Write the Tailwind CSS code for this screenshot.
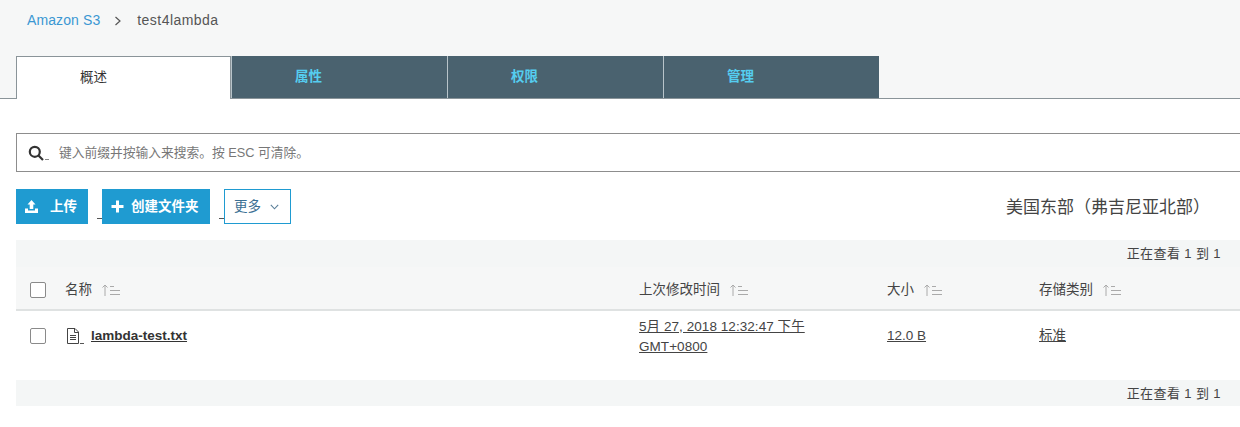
<!DOCTYPE html>
<html lang="zh-CN">
<head>
  <meta charset="UTF-8" />
  <title>test4lambda - S3</title>
  <script src="https://cdn.jsdelivr.net/npm/@tailwindcss/browser@4"></script>
</head>
<body class="bg-white h-[427px] overflow-hidden font-['Liberation_Sans','Noto_Sans_CJK_SC',sans-serif] text-[13.5px] text-[#444]">
  <!-- breadcrumb + tabs -->
  <header class="h-[99px] bg-[#f6f7f7] border-b border-[#8a9499]">
    <nav class="h-[56px] pl-[27px] pb-[15px] flex items-center text-[14px]">
      <a class="text-[#3b97d3] tracking-[0.1px]">Amazon S3</a>
      <svg class="w-[8px] h-[10px] ml-[14px] mr-[15px]" viewBox="0 0 8 10" fill="none" stroke="#555" stroke-width="1.2"><path d="M1.5 1l4.5 4-4.5 4"/></svg>
      <span class="text-[#555] tracking-[0.45px]">test4lambda</span>
    </nav>
    <div class="flex pl-[16px] h-[43px]">
      <div class="w-[215px] h-[43px] bg-white border border-b-0 border-[#8a9499] flex items-center pl-[63px] text-[#333]">概述</div>
      <div class="w-[216px] h-[42px] bg-[#4a626f] border-l border-[#b8c4ca] flex items-center pl-[63px] font-bold text-[#55cdf0]">属性</div>
      <div class="w-[216px] h-[42px] bg-[#4a626f] border-l border-[#b8c4ca] flex items-center pl-[63px] font-bold text-[#55cdf0]">权限</div>
      <div class="w-[216px] h-[42px] bg-[#4a626f] border-l border-[#b8c4ca] flex items-center pl-[63px] font-bold text-[#55cdf0]">管理</div>
    </div>
  </header>

  <main class="pl-[16px] pt-[34px]">
    <!-- search -->
    <div class="h-[39px] border border-r-0 border-[#8d8d8d] flex items-center pl-[11px] text-[#777]">
      <svg class="w-[16px] h-[16px] mt-[1px]" viewBox="0 0 16 16" fill="none" stroke="#333" stroke-width="2.2"><circle cx="6.8" cy="6.8" r="5"/><path d="M10.5 10.5l4.5 4.5"/></svg>
      <span class="w-[4px] h-px bg-[#888] mt-[14px] ml-[1px]"></span>
      <span class="ml-[10px] mt-[1px] text-[12.75px]">键入前缀并按输入来搜索。按 ESC 可清除。</span>
    </div>

    <!-- actions -->
    <div class="flex items-center mt-[17px] h-[35px] pr-[30px]">
      <button class="w-[72px] h-[35px] bg-[#1f9bd1] text-white font-bold flex items-center pl-[8px]">
        <svg class="w-[15px] h-[15px]" viewBox="0 0 15 15" fill="white"><path d="M7.5 1L11.5 5.5H9.3V10H5.700V5.500H3.500Z"/><path d="M1 9.500H4V11.500H11V9.500H14V14H1Z"/></svg>
        <span class="ml-[11px] mt-[2px]">上传</span>
      </button>
      <span class="w-[5px] h-px ml-[9px] bg-[#555] mt-[24px]"></span>
      <button class="w-[108px] h-[35px] bg-[#1f9bd1] text-white font-bold flex items-center pl-[9px]">
        <svg class="w-[13px] h-[13px]" viewBox="0 0 13 13" fill="white"><path d="M5 0.500H8V5H12.500V8H8V12.500H5V8H0.500V5H5Z"/></svg>
        <span class="ml-[7px] mt-[2px]">创建文件夹</span>
      </button>
      <span class="w-[5px] h-px ml-[9px] bg-[#555] mt-[24px]"></span>
      <button class="w-[67px] h-[35px] border border-[#1f9bd1] text-[#3a6f93] flex items-center pl-[9px]">
        <span class="mt-[2px]">更多</span>
        <svg class="w-[9px] h-[6px] ml-[9px] mt-[1px]" viewBox="0 0 9 6" fill="none" stroke="#5a7f99" stroke-width="1.100"><path d="M0.800 0.800L4.500 4.800L8.200 0.800"/></svg>
      </button>
      <span class="ml-auto mt-[2px] text-[17px] text-[#444]">美国东部（弗吉尼亚北部）</span>
    </div>

    <!-- table -->
    <div class="mt-[16px]">
      <div class="h-[27px] pt-[1px] bg-[#f4f6f6] flex items-center justify-end pr-[19px] text-[13px] text-[#444] tracking-[0.4px]">正在查看 1 到 1</div>
      <div class="h-[44px] pt-[3px] bg-[#f6f7f7] border-b-2 border-[#dfe2e2] grid grid-cols-[623px_248px_152px_1fr] items-center">
        <div class="flex items-center">
          <span class="w-[16px] h-[16px] ml-[14px] border border-[#8a8a8a] rounded-[2px] bg-white"></span>
          <span class="ml-[19px] mt-[2px]">名称</span>
          <svg class="w-[20px] h-[12px] ml-[9px]" viewBox="0 0 20 12" fill="none" stroke="#aaa"><path d="M4 12V1M1.500 3.500L4 1L6.500 3.500M9 2.500H13M9 6.500H19M9 10.500H19"/></svg>
        </div>
        <div class="flex items-center"><span class="mt-[2px]">上次修改时间</span><svg class="w-[20px] h-[12px] ml-[9px]" viewBox="0 0 20 12" fill="none" stroke="#aaa"><path d="M4 12V1M1.500 3.500L4 1L6.500 3.500M9 2.500H13M9 6.500H19M9 10.500H19"/></svg></div>
        <div class="flex items-center"><span class="mt-[2px]">大小</span><svg class="w-[20px] h-[12px] ml-[9px]" viewBox="0 0 20 12" fill="none" stroke="#aaa"><path d="M4 12V1M1.500 3.500L4 1L6.500 3.500M9 2.500H13M9 6.500H19M9 10.500H19"/></svg></div>
        <div class="flex items-center"><span class="mt-[2px]">存储类别</span><svg class="w-[20px] h-[12px] ml-[9px]" viewBox="0 0 20 12" fill="none" stroke="#aaa"><path d="M4 12V1M1.500 3.500L4 1L6.500 3.500M9 2.500H13M9 6.500H19M9 10.500H19"/></svg></div>
      </div>
      <div class="h-[69px] pb-[19px] grid grid-cols-[623px_248px_152px_1fr] items-center">
        <div class="flex items-center">
          <span class="w-[16px] h-[16px] ml-[14px] border border-[#8a8a8a] rounded-[2px] bg-white"></span>
          <svg class="w-[14px] h-[16px] ml-[20px]" viewBox="0 0 14 16" fill="none" stroke="#444"><path d="M1.500 0.500H9L12.500 4V15.500H1.500ZM8.500 0.500V4.500H12.500M4 7.500H10M4 9.500H10M4 11.500H10"/></svg>
          <span class="w-[4px] h-px bg-[#555] mt-[14px]"></span>
          <a class="ml-[7px] font-bold underline text-[#333]">lambda-test.txt</a>
        </div>
        <a class="underline leading-[20px] w-[180px] mt-[1px] tracking-[0.06px]">5月 27, 2018 12:32:47 下午 GMT+0800</a>
        <a class="underline">12.0 B</a>
        <a class="underline">标准</a>
      </div>
      <div class="h-[26px] pt-[1px] bg-[#f4f6f6] flex items-center justify-end pr-[19px] text-[13px] text-[#444] tracking-[0.4px]">正在查看 1 到 1</div>
    </div>
  </main>
</body>
</html>
